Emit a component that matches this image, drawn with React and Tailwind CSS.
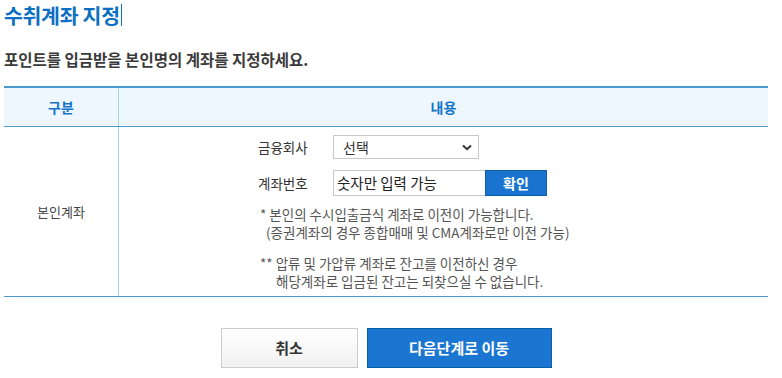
import React from "react";

export default function App() {
  return (
    <div
      className="w-[782px] h-[378px] bg-white overflow-hidden"
      style={{ fontFamily: '"Noto Sans CJK KR", "Noto Sans", sans-serif' }}
    >
      <div className="ml-[4px] w-[764px] flex flex-col">
        <div className="pt-[3px] flex items-center h-[27px]">
          <h1 className="text-[20.5px] leading-[24px] font-bold text-[#0b6fc4] tracking-[-0.3px]">
            수취계좌 지정
          </h1>
          <span className="ml-[1px] w-px h-[22px] bg-[#0b6fc4]" />
        </div>
        <p className="mt-[22px] text-[15.5px] leading-[20px] font-bold text-[#3a3a3a]">
          포인트를 입금받을 본인명의 계좌를 지정하세요.
        </p>

        <div className="mt-[17px] border-t-2 border-b border-[#4b9ad0]">
          <div className="grid grid-cols-[115px_1fr] h-[39px] bg-[#eef7ff] border-b border-[#4b9ad0]">
            <div className="border-r border-[#a9d3f5] flex items-center justify-center text-[14px] font-bold text-[#1474c8]">
              구분
            </div>
            <div className="flex items-center justify-center text-[14px] font-bold text-[#1474c8]">
              내용
            </div>
          </div>
          <div className="grid grid-cols-[115px_1fr] h-[169px]">
            <div className="border-r border-[#a9d3f5] flex items-center justify-center text-[13px] text-[#444]">
              본인계좌
            </div>
            <div className="pl-[139px] pt-[8px] flex flex-col">
              <div className="flex items-center h-[24px]">
                <span className="w-[75px] text-[13.5px] text-[#333]">금융회사</span>
                <div className="w-[146px] h-[24px] border border-[#c8c8c8] flex items-center justify-between pl-[9px] pr-[6px] text-[14px] text-[#333]">
                  <span>선택</span>
                  <svg width="10" height="7" viewBox="0 0 10 7">
                    <path d="M1 1.5 L5 5.2 L9 1.5" fill="none" stroke="#333" strokeWidth="2" />
                  </svg>
                </div>
              </div>
              <div className="flex items-center h-[26px] mt-[11px]">
                <span className="w-[75px] text-[13.5px] text-[#333]">계좌번호</span>
                <div className="w-[152px] h-[26px] border border-[#c8c8c8] border-r-0 flex items-center pl-[3px] text-[14.5px] text-[#222]">
                  숫자만 입력 가능
                </div>
                <button className="w-[62px] h-[26px] bg-[#1a74cf] border border-[#0d5ea8] text-white text-[14px] font-bold flex items-center justify-center">
                  확인
                </button>
              </div>
              <div className="mt-[9px] pl-[2px] text-[13.5px] leading-[18px] text-[#555]">
                <div>* 본인의 수시입출금식 계좌로 이전이 가능합니다.</div>
                <div className="pl-[6px]">(증권계좌의 경우 종합매매 및 CMA계좌로만 이전 가능)</div>
                <div className="mt-[13px]">** 압류 및 가압류 계좌로 잔고를 이전하신 경우</div>
                <div className="pl-[16px]">해당계좌로 입금된 잔고는 되찾으실 수 없습니다.</div>
              </div>
            </div>
          </div>
        </div>

        <div className="mt-[31px] flex justify-center gap-[9px]">
          <button className="w-[137px] h-[40px] border border-[#cccccc] bg-gradient-to-b from-white to-[#f1f1f1] text-[15px] font-bold text-[#333]">
            취소
          </button>
          <button className="w-[185px] h-[40px] border border-[#0b5ea8] bg-[#1a76d0] text-[15px] font-bold text-white">
            다음단계로 이동
          </button>
        </div>
      </div>
    </div>
  );
}
